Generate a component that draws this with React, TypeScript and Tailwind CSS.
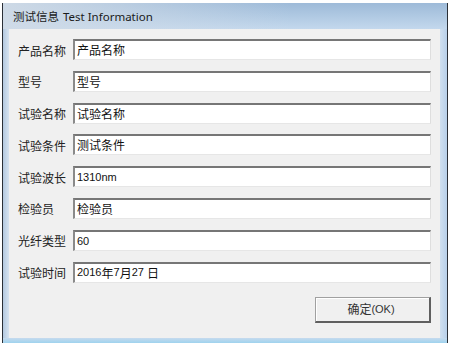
import React from "react";

const NUM = "text-[11px] font-['Liberation_Sans',sans-serif]";

const rows: { label: string; value: React.ReactNode }[] = [
  { label: "产品名称", value: "产品名称" },
  { label: "型号", value: "型号" },
  { label: "试验名称", value: "试验名称" },
  { label: "试验条件", value: "测试条件" },
  { label: "试验波长", value: <span className={NUM}>1310nm</span> },
  { label: "检验员", value: "检验员" },
  { label: "光纤类型", value: <span className={NUM}>60</span> },
  {
    label: "试验时间",
    value: (
      <>
        <span className={NUM}>2016</span>年<span className={NUM}>7</span>月
        <span className={NUM}>27</span>
        <span className="ml-[3px]">日</span>
      </>
    ),
  },
];

export default function App() {
  return (
    <div className="w-[451px] h-[343px] bg-white overflow-hidden font-['Noto_Sans_CJK_SC','Noto_Sans',sans-serif]">
      <div className="ml-[2px] mt-[3px] w-[446px] h-[340px] flex flex-col border-l border-r border-[#2a2f36] bg-[#bcd2e9]">
        <div className="h-[26px] shrink-0 flex items-center pl-[10px] pt-[2px] text-[11.5px] text-[#1a1a1a] bg-[linear-gradient(to_right,rgba(208,219,231,0.95),rgba(208,219,231,0)_65%),linear-gradient(to_bottom,#9dbad8,#c3d8ed)]">
          <span>测试信息</span>
          <span className="ml-[4px] font-['Noto_Sans',sans-serif]">Test Information</span>
        </div>
        <div className="flex-1 flex">
          <div className="w-[6px] bg-[linear-gradient(to_right,#b4c9e0,#d6e3f0)]" />
          <div className="w-[431px] h-[309px] bg-[#f0f0f0] flex flex-col pt-[10px] pr-[9px]">
            <div className="flex flex-col gap-[10.8px]">
              {rows.map((r) => (
                <div key={r.label} className="flex items-center h-[21px]">
                  <div className="w-[64px] pl-[9px] pt-[2px] text-[12px] text-[#222]">{r.label}</div>
                  <div className="flex-1 h-[21px] bg-white border-t-2 border-l-2 border-t-[#767676] border-l-[#8a8a8a] border-r border-b border-r-[#dedede] border-b-[#e6e6e6] flex items-center pl-[2px] text-[12px] text-[#111]">
                    {r.value}
                  </div>
                </div>
              ))}
            </div>
            <div className="flex justify-end mt-[14px]">
              <div className="w-[116px] h-[26px] bg-[#f0f0f0] border-t border-l border-t-[#a0a0a0] border-l-[#a0a0a0] border-r-2 border-b-2 border-r-[#5f5f5f] border-b-[#5f5f5f] shadow-[inset_1px_1px_0_#ffffff] flex items-center justify-center pr-[3px] text-[12px] text-[#333]">
                <span>确定</span>
                <span className="text-[11px] font-['Liberation_Sans',sans-serif]">(OK)</span>
              </div>
            </div>
          </div>
          <div className="flex-1 bg-[linear-gradient(to_right,#d0e0f0,#b8d0ea)]" />
        </div>
        <div className="h-[5px] shrink-0 bg-[linear-gradient(to_bottom,#c6daee,#9fd3ee)]" />
      </div>
    </div>
  );
}
